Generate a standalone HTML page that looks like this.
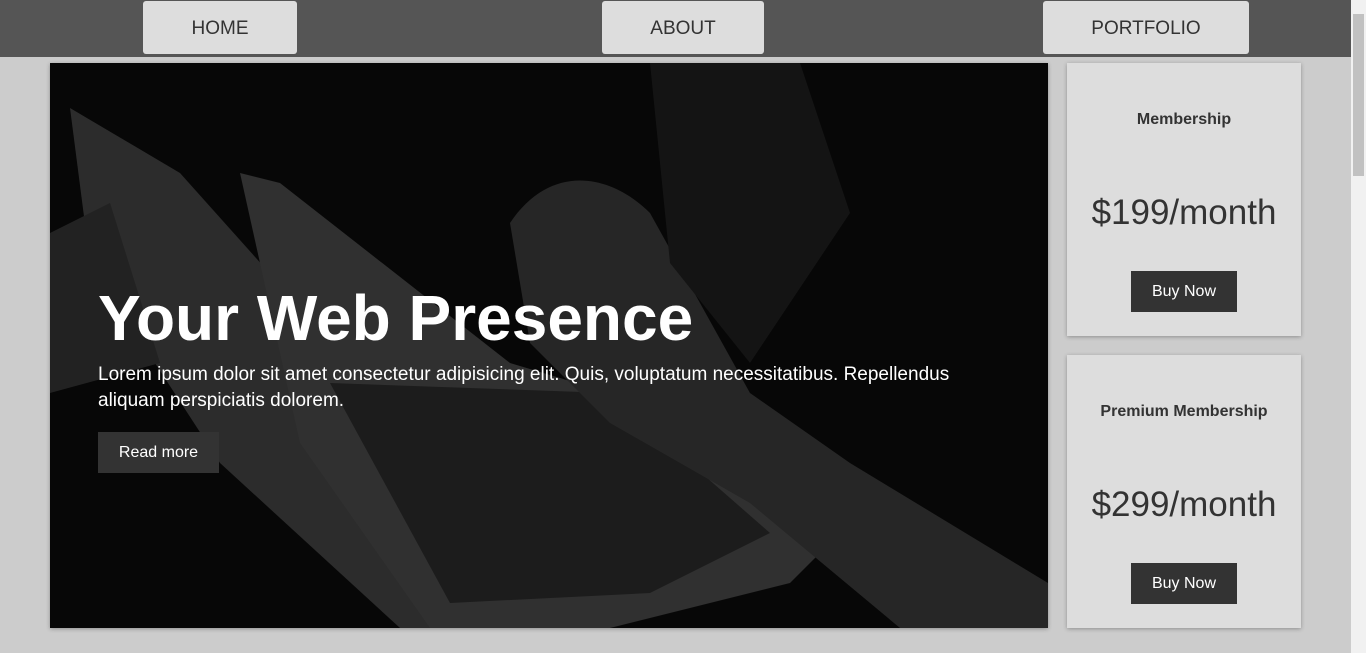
<!DOCTYPE html>
<html><head><style>
*{margin:0;padding:0;box-sizing:border-box}
body{width:1366px;height:653px;overflow:hidden;background:#ccc;font-family:"Liberation Sans",Arial,sans-serif;position:relative}
.nav{position:absolute;left:0;top:0;width:1351px;height:57px;background:#555}
.nb{position:absolute;top:1px;height:53px;background:#ddd;border-radius:3px;color:#333;font-size:19px;text-align:center;line-height:55px}
.sb{position:absolute;left:1351px;top:0;width:15px;height:653px;background:#f1f1f1}
.th{position:absolute;left:1353px;top:14px;width:11px;height:162px;background:#c1c1c1}
.hero{position:absolute;left:50px;top:63px;width:998px;height:565px;background:#070707;overflow:hidden;box-shadow:0 1px 4px rgba(0,0,0,.3)}
.card{position:absolute;left:1067px;width:234px;height:273px;background:#ddd;box-shadow:0 1px 4px rgba(0,0,0,.3);text-align:center;color:#333}
.card h4{position:absolute;top:48px;width:100%;font-size:16px}
.card .p{position:absolute;top:130px;width:100%;font-size:35px}
.card .b{position:absolute;left:64px;top:208px;width:106px;height:41px;background:#333;color:#fff;font-size:16px;line-height:42px}
</style></head><body>
<div class="nav">
<div class="nb" style="left:143px;width:154px">HOME</div>
<div class="nb" style="left:602px;width:162px">ABOUT</div>
<div class="nb" style="left:1043px;width:206px">PORTFOLIO</div>
</div>
<div class="hero">
<svg width="998" height="565" style="position:absolute;left:0;top:0">
<polygon points="20,45 130,110 300,300 420,565 350,565 170,400 40,200" fill="#2c2c2c"/>
<polygon points="190,110 230,120 460,300 560,330 780,480 740,520 560,565 380,565 250,380" fill="#303030"/>
<polygon points="280,320 560,330 720,470 600,530 400,540" fill="#1c1c1c"/>
<polygon points="0,170 60,140 110,300 0,330" fill="#222"/>
<path d="M460,160 C500,100 560,110 600,150 L700,330 L800,400 L998,520 L998,565 L850,565 L700,440 L560,360 L480,280 Z" fill="#262626"/>
<path d="M600,0 L750,0 L800,150 L700,300 L620,200 Z" fill="#141414"/>
</svg>
<div style="position:absolute;left:48px;top:218px;color:#fff;font-size:64px;font-weight:bold">Your Web Presence</div>
<div style="position:absolute;left:48px;top:299px;width:900px;color:#fff;font-size:19px;line-height:26px">Lorem ipsum dolor sit amet consectetur adipisicing elit. Quis, voluptatum necessitatibus. Repellendus aliquam perspiciatis dolorem.</div>
<div style="position:absolute;left:48px;top:369px;width:121px;height:41px;background:#333;color:#fff;font-size:16px;line-height:41px;text-align:center">Read more</div>
</div>
<div class="card" style="top:63px"><h4>Membership</h4><div class="p">$199/month</div><div class="b">Buy Now</div></div>
<div class="card" style="top:355px"><h4>Premium Membership</h4><div class="p">$299/month</div><div class="b">Buy Now</div></div>
<div class="sb"></div><div class="th"></div>
</body></html>
